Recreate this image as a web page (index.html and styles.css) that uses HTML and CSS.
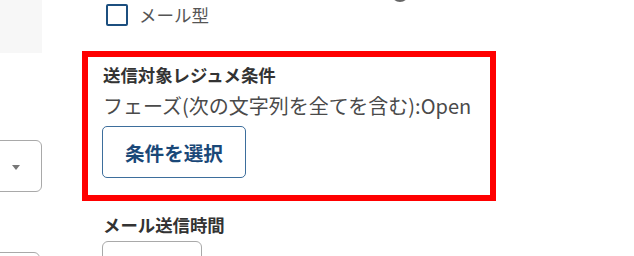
FILE: index.html
```html
<!DOCTYPE html>
<html lang="ja">
<head>
<meta charset="utf-8">
<link rel="stylesheet" href="styles.css">
</head>
<body>
<div class="page">
  <div class="side">
    <div class="side-panel"></div>
    <div class="select"><span class="caret"></span></div>
    <div class="select second"></div>
  </div>
  <div class="main">
    <div class="top-row">
      <label class="check"><span class="box"></span><span class="check-text">メール型</span></label>
      <span class="ring"></span>
    </div>
    <div class="highlight">
      <div class="label">送信対象レジュメ条件</div>
      <div class="value">フェーズ(次の文字列を全てを含む):Open</div>
      <button class="btn">条件を選択</button>
    </div>
    <div class="label after">メール送信時間</div>
    <div class="time-box"></div>
  </div>
</div>
</body>
</html>
```
FILE: styles.css
```css
html, body {
  margin: 0;
  padding: 0;
  background: #ffffff;
  overflow: hidden;
}
body {
  width: 634px;
  height: 256px;
  font-family: "Noto Sans CJK JP", "Noto Sans", sans-serif;
  color: #333;
}
.page {
  display: flex;
  height: 256px;
  overflow: hidden;
}
.side {
  width: 42px;
  overflow: hidden;
  flex-shrink: 0;
}
.side-panel {
  height: 53px;
  background: #f7f7f7;
}
.select {
  box-sizing: border-box;
  margin-top: 87px;
  margin-left: -78px;
  width: 120px;
  height: 52px;
  border: 1px solid #a9a9a9;
  border-radius: 6px;
  display: flex;
  justify-content: flex-end;
  align-items: center;
  padding-right: 21px;
  padding-top: 2px;
}
.select.second {
  margin-top: 60px;
  width: 118px;
  padding-right: 0;
}
.caret {
  width: 0;
  height: 0;
  border-left: 4px solid transparent;
  border-right: 4px solid transparent;
  border-top: 5px solid #777;
}
.main {
  margin-left: 40px;
  width: 414px;
  flex-shrink: 0;
}
.top-row {
  display: flex;
  align-items: flex-start;
  height: 51px;
  position: relative;
}
.check {
  display: flex;
  align-items: center;
  margin-left: 24px;
  margin-top: 4px;
  gap: 11px;
}
.box {
  width: 18px;
  height: 18px;
  border: 2px solid #1c4f7f;
  border-radius: 2px;
}
.check-text {
  font-size: 17.5px;
  line-height: 22px;
  color: #555;
}
.ring {
  position: absolute;
  left: 309px;
  top: -16px;
  width: 14px;
  height: 14px;
  border: 2px solid #666;
  border-radius: 50%;
}
.highlight {
  border: 6px solid #ff0000;
  padding: 5px 15px 17px 15px;
  width: 414px;
  box-sizing: border-box;
}
.label {
  font-size: 17.4px;
  font-weight: 700;
  line-height: 26px;
  color: #333;
}
.value {
  font-size: 20px;
  line-height: 30px;
  color: #4a4a4a;
  margin-top: 3px;
  white-space: nowrap;
}
.btn {
  margin-top: 5px;
  margin-left: -1px;
  height: 52px;
  padding: 0 22px;
  background: #fff;
  border: 1px solid #3d6e9c;
  border-radius: 5px;
  font-family: "Noto Sans CJK JP", "Noto Sans", sans-serif;
  font-size: 19.6px;
  font-weight: 700;
  color: #1a4878;
  display: block;
}
.label.after {
  margin-top: 11px;
  margin-left: 21px;
}
.time-box {
  margin-top: 3px;
  margin-left: 20px;
  width: 98px;
  height: 40px;
  border: 1px solid #a9a9a9;
  border-radius: 6px;
}
```
